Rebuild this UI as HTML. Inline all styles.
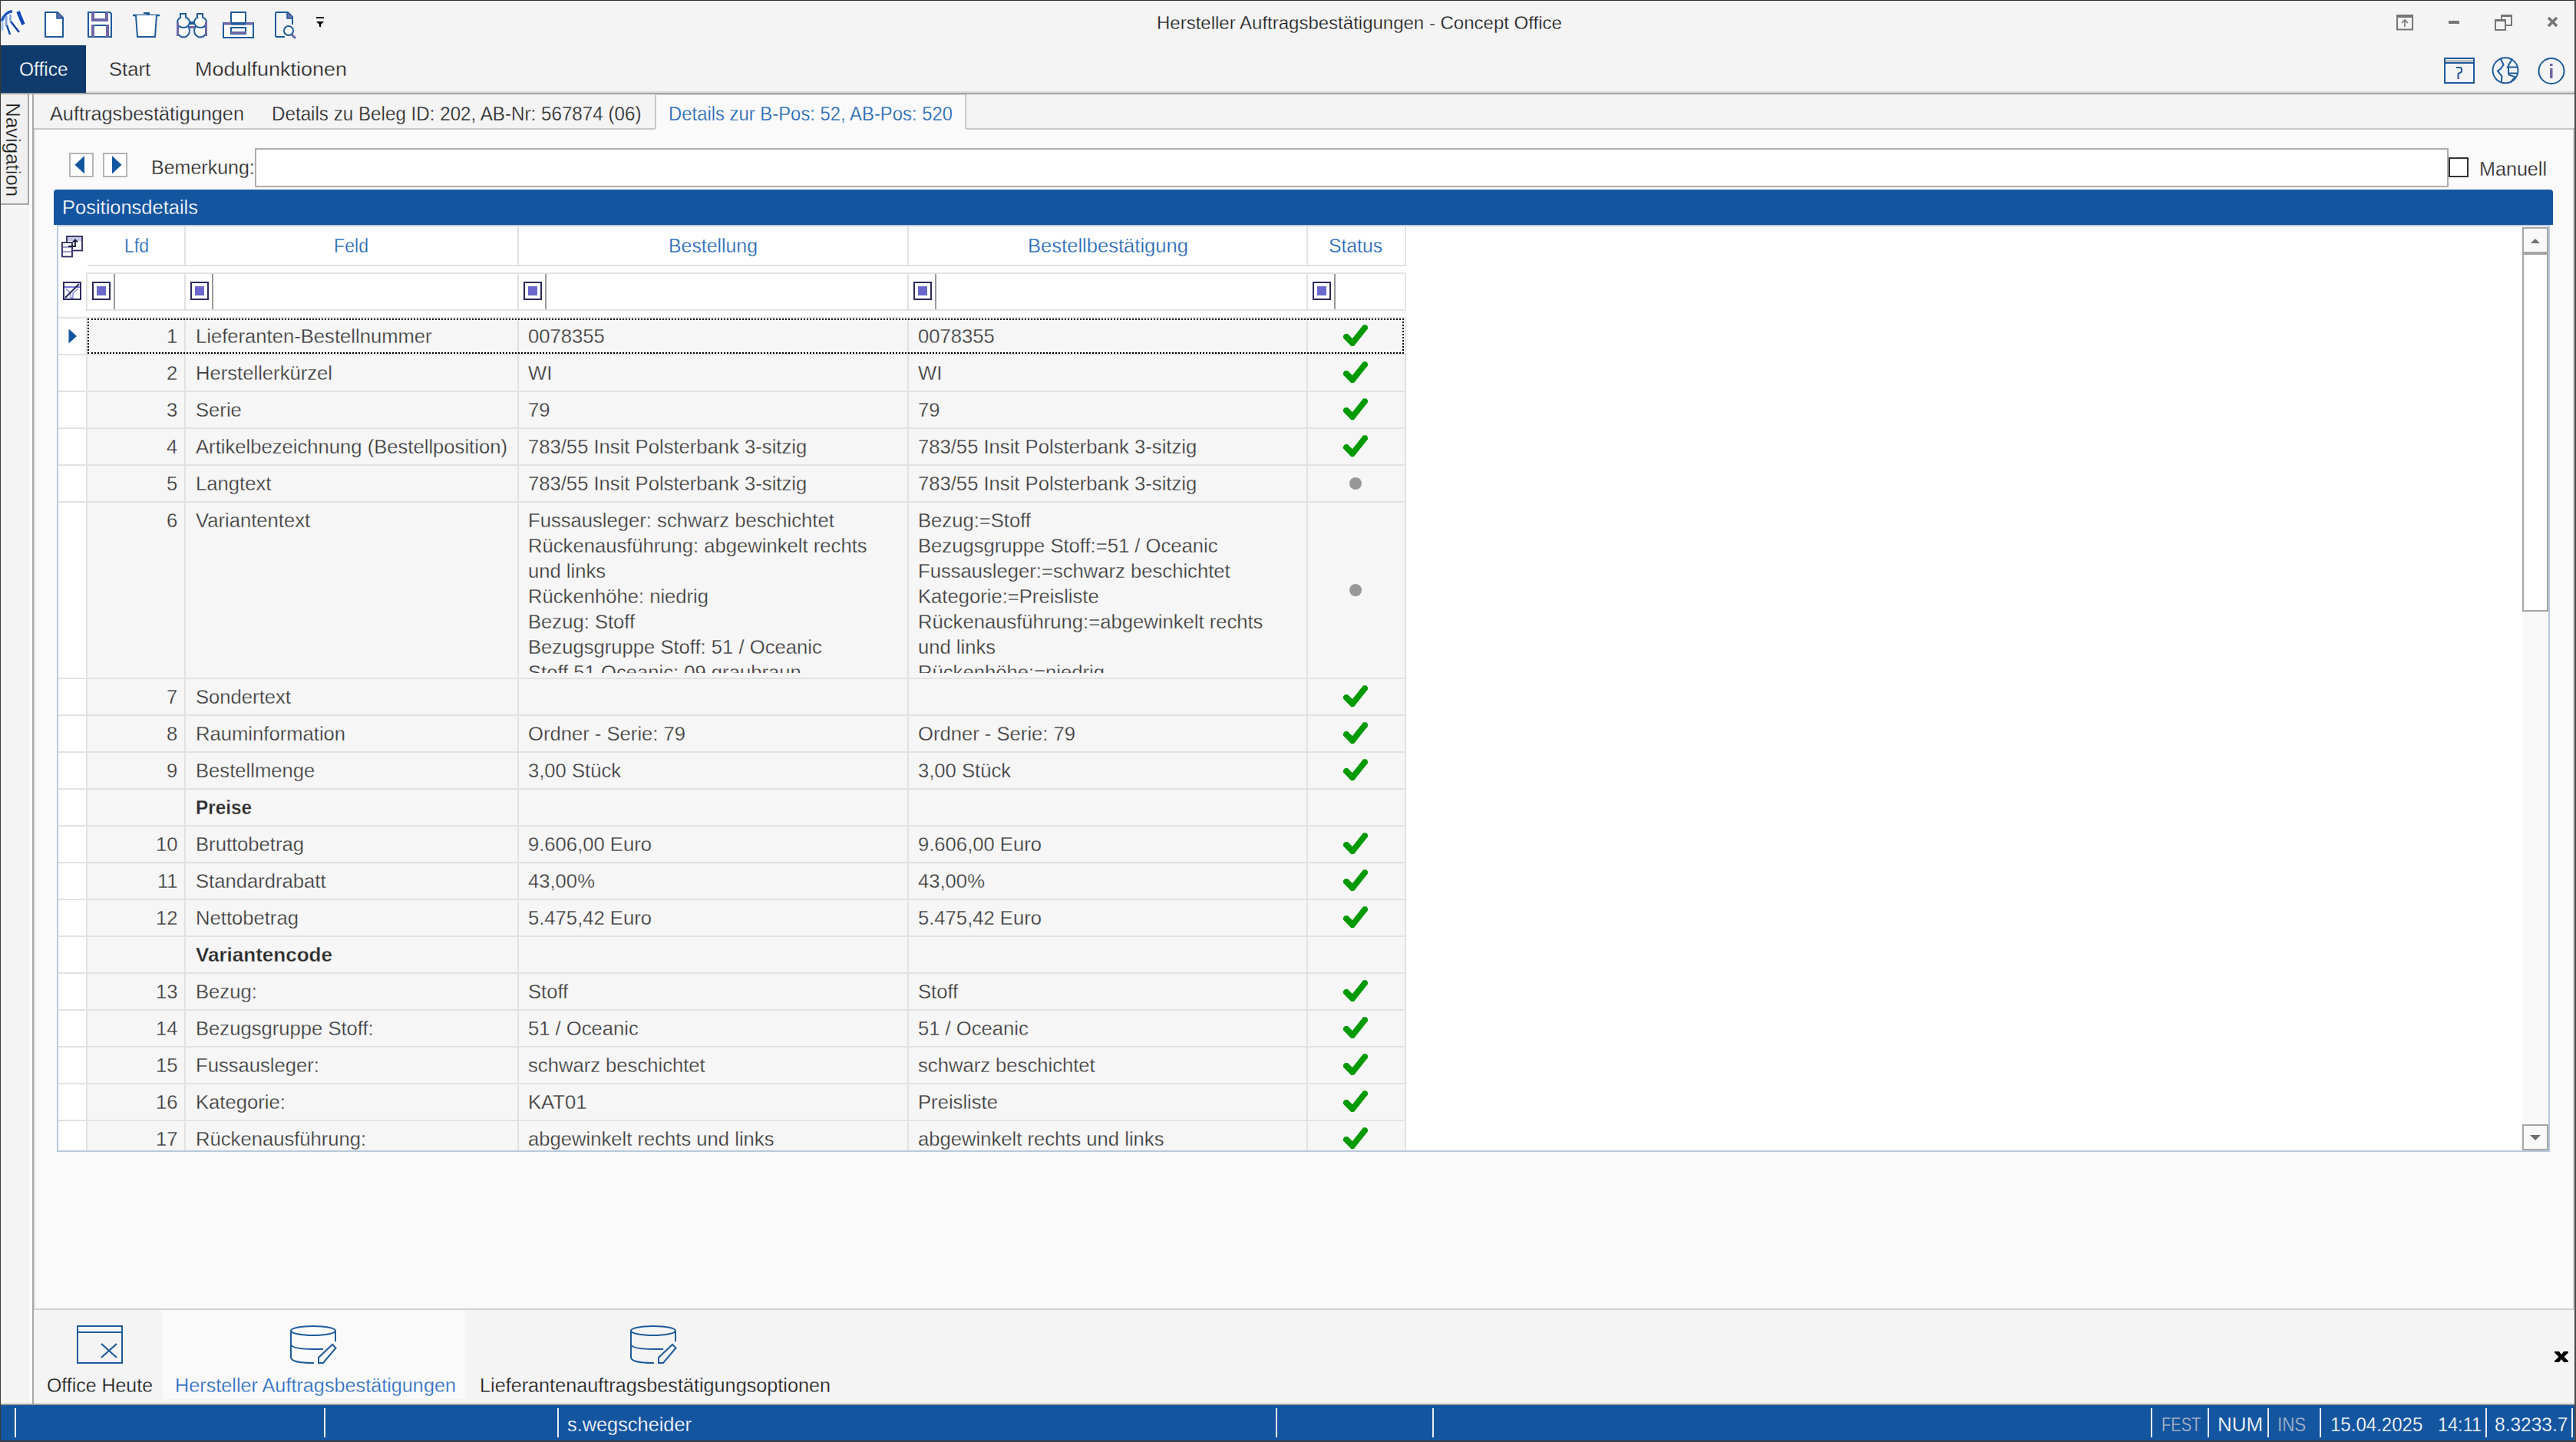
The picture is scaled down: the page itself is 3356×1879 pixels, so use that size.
<!DOCTYPE html>
<html><head><meta charset="utf-8"><title>Concept Office</title>
<style>
html,body{margin:0;padding:0;}
body{width:3356px;height:1879px;position:relative;overflow:hidden;background:#f3f3f3;font-family:"Liberation Sans", sans-serif;}
.a{position:absolute;}
.t{position:absolute;white-space:pre;transform-origin:0 0;}
svg.a{overflow:visible;}
</style></head><body>
<div class="a" style="left:0px;top:0px;width:3356px;height:1879px;background:#f4f4f4;"></div>
<svg class="a" style="left:0px;top:8px;" width="36" height="42" viewBox="0 0 36 42"><circle cx="17" cy="20.5" r="16.2" fill="#fff"/>
<path d="M16 6.5 Q6 8 2 20" stroke="#1d56c2" stroke-width="3.6" fill="none"/>
<path d="M3 19 V32" stroke="#a9c2ec" stroke-width="3" fill="none"/>
<path d="M8 13 V26" stroke="#86a6dc" stroke-width="3.2" fill="none"/><path d="M9 25 L13 37" stroke="#1a4bb0" stroke-width="2.4" fill="none"/>
<path d="M13.5 11 V20" stroke="#6f95d4" stroke-width="2.4" fill="none"/><path d="M14 20 L25 34" stroke="#0c3aa6" stroke-width="2.4" fill="none"/>
<path d="M23.5 7 L30.5 24" stroke="#1249b6" stroke-width="4.6" fill="none"/></svg>
<svg class="a" style="left:58px;top:15px;" width="26" height="35" viewBox="0 0 26 35"><path d="M1 1 H17 L24 8 V33 H1 Z" fill="#fff" stroke="#1f5b9a" stroke-width="2"/><path d="M16 1 V9 H24" fill="#6d68a8" stroke="#1f5b9a" stroke-width="1.5"/></svg>
<svg class="a" style="left:114px;top:15px;" width="33" height="35" viewBox="0 0 33 35"><path d="M1 1 H29 L31 3 V33 H1 Z" fill="#fff" stroke="#1f5b9a" stroke-width="2"/>
<rect x="5" y="1" width="4" height="12" fill="#6d68a8"/><rect x="23" y="1" width="4" height="12" fill="#6d68a8"/><rect x="5" y="9" width="22" height="4" fill="#6d68a8"/>
<rect x="5" y="17" width="22" height="2" fill="#1f5b9a"/><rect x="5" y="17" width="4" height="16" fill="#6d68a8"/><rect x="24" y="17" width="4" height="16" fill="#6d68a8"/></svg>
<svg class="a" style="left:172px;top:15px;" width="37" height="35" viewBox="0 0 37 35"><path d="M1 5 H36" stroke="#1f5b9a" stroke-width="2.5"/><path d="M15 2 H22 V5" fill="#1f5b9a" stroke="#1f5b9a" stroke-width="2"/><path d="M5 5 L7 33 H30 L32 5" fill="#fff" stroke="#1f5b9a" stroke-width="2"/></svg>
<svg class="a" style="left:229px;top:15px;" width="42" height="35" viewBox="0 0 42 35"><ellipse cx="10" cy="25" rx="8" ry="8.5" fill="#fff" stroke="#1f5b9a" stroke-width="2"/><ellipse cx="32" cy="25" rx="8" ry="8.5" fill="#fff" stroke="#1f5b9a" stroke-width="2"/>
<ellipse cx="10" cy="14" rx="8" ry="7" fill="#fff" stroke="#1f5b9a" stroke-width="2"/><ellipse cx="32" cy="14" rx="8" ry="7" fill="#fff" stroke="#1f5b9a" stroke-width="2"/>
<path d="M6 8 V3 H13 V8 M28 8 V3 H35 V8" fill="#fff" stroke="#1f5b9a" stroke-width="2"/>
<rect x="17" y="13" width="8" height="4" fill="#1f5b9a"/><rect x="17" y="19" width="8" height="3" fill="#6d68a8"/>
<rect x="1" y="14" width="3" height="18" fill="#6d68a8"/><rect x="38" y="14" width="3" height="18" fill="#6d68a8"/></svg>
<svg class="a" style="left:290px;top:15px;" width="41" height="35" viewBox="0 0 41 35"><rect x="11" y="1" width="19" height="15" fill="#fff" stroke="#1f5b9a" stroke-width="2"/>
<rect x="1" y="15" width="39" height="19" fill="#fff" stroke="#1f5b9a" stroke-width="2"/><rect x="1" y="14" width="39" height="3.5" fill="#6d68a8"/><rect x="11" y="14" width="19" height="3.5" fill="#1f5b9a"/>
<rect x="11" y="21" width="19" height="8" fill="#fff" stroke="#1f5b9a" stroke-width="2"/><rect x="11" y="26" width="19" height="3" fill="#6d68a8"/></svg>
<svg class="a" style="left:358px;top:15px;" width="32" height="36" viewBox="0 0 32 36"><path d="M1 1 H17 L23 7 V17 M13 33 H1 Z" fill="none" stroke="#1f5b9a" stroke-width="2"/><path d="M1 1 V33" stroke="#1f5b9a" stroke-width="2"/>
<path d="M16 1 V9 H23" fill="#6d68a8" stroke="#1f5b9a" stroke-width="1.5"/>
<circle cx="18" cy="25" r="6" fill="#fff" stroke="#1f5b9a" stroke-width="2"/><path d="M22 30 L27 35" stroke="#6d68a8" stroke-width="3"/></svg>
<svg class="a" style="left:412px;top:22px;" width="11" height="14" viewBox="0 0 11 14"><rect x="0" y="0" width="10" height="2" fill="#000"/><path d="M0 6 H10 L5 11 Z" fill="#000"/><rect x="4" y="9" width="2" height="4" fill="#000"/></svg>
<div class="t" style="left:1507.0px;top:18.2px;font-size:24px;line-height:24px;color:#1a1a1a;-webkit-text-stroke:0.3px #f4f4f4;">Hersteller Auftragsbestätigungen - Concept Office</div>
<svg class="a" style="left:3122px;top:19px;" width="23" height="21" viewBox="0 0 23 21"><rect x="1" y="1.5" width="20" height="18" fill="none" stroke="#767676" stroke-width="2"/><rect x="0" y="0" width="22" height="4" fill="#767676"/><path d="M11 16 V7 M7 11 L11 7 L15 11" stroke="#767676" stroke-width="1.6" fill="none"/></svg>
<div class="a" style="left:3190px;top:27px;width:14px;height:4px;background:#767676;"></div>
<svg class="a" style="left:3250px;top:19px;" width="23" height="21" viewBox="0 0 23 21"><rect x="9" y="1" width="13" height="13" fill="none" stroke="#767676" stroke-width="2"/><rect x="8" y="0" width="15" height="3" fill="#767676"/><rect x="1" y="7" width="13" height="13" fill="#f3f3f3" stroke="#767676" stroke-width="2"/><rect x="0" y="6" width="15" height="3" fill="#767676"/></svg>
<svg class="a" style="left:3318px;top:21px;" width="15" height="15" viewBox="0 0 15 15"><path d="M2 2 L13 13 M13 2 L2 13" stroke="#767676" stroke-width="3.6"/></svg>
<div class="a" style="left:0px;top:0px;width:3356px;height:1px;background:#2d2d2d;"></div>
<div class="a" style="left:0px;top:0px;width:1px;height:1879px;background:#3a3a3a;"></div>
<div class="a" style="left:3354px;top:0px;width:2px;height:1879px;background:#4a4a4a;"></div>
<div class="a" style="left:1px;top:59px;width:111px;height:62px;background:#0e3a6c;"></div>
<div class="t" style="left:24.5px;top:78.1px;font-size:25px;line-height:25px;color:#ffffff;transform:scaleX(0.9793);-webkit-text-stroke:0.3px #0e3a6c;">Office</div>
<div class="t" style="left:142.0px;top:78.1px;font-size:25px;line-height:25px;color:#262626;transform:scaleX(1.0228);-webkit-text-stroke:0.3px #f4f4f4;">Start</div>
<div class="t" style="left:254.0px;top:78.1px;font-size:25px;line-height:25px;color:#262626;transform:scaleX(1.0792);-webkit-text-stroke:0.3px #f4f4f4;">Modulfunktionen</div>
<svg class="a" style="left:3184px;top:75px;" width="41" height="35" viewBox="0 0 41 35"><rect x="1" y="1" width="38" height="32" fill="none" stroke="#1f5b9a" stroke-width="2"/><rect x="2" y="3" width="36" height="3" fill="#c0c0c0"/><rect x="1" y="6" width="38" height="2" fill="#1f5b9a"/><path d="M16 13 H21 Q23 13 23 15.5 V17 Q23 19.5 20.5 20 Q18.5 20.5 18.5 22 V26" fill="none" stroke="#1f5b9a" stroke-width="2"/><rect x="17.5" y="24" width="2.5" height="4" fill="#6d68a8"/></svg>
<svg class="a" style="left:3246px;top:75px;" width="37" height="35" viewBox="0 0 37 35"><circle cx="18" cy="16.8" r="16.5" fill="none" stroke="#1f5b9a" stroke-width="2"/><path d="M12 1.5 L15.5 9.5 L12 14.5 L8 17.4 L11 21.4 L13.5 24.4 L12.5 33 M27 1.5 L23 8.5 L21 12.5 H34 M22 13 V22 M22 20.4 H33 M22 22.4 L31 25.4 L27 29.4 L25 32.4" fill="none" stroke="#1f5b9a" stroke-width="2"/></svg>
<svg class="a" style="left:3306px;top:75px;" width="37" height="35" viewBox="0 0 37 35"><circle cx="18" cy="17.5" r="16.5" fill="none" stroke="#1f5b9a" stroke-width="2"/><rect x="16" y="8" width="3.5" height="3" fill="#6d68a8"/><rect x="16" y="14" width="3.5" height="13" fill="#6d68a8"/></svg>
<div class="a" style="left:112px;top:119px;width:3242px;height:2px;background:#d8d8d8;"></div>
<div class="a" style="left:1px;top:121px;width:3353px;height:2px;background:#a4a4a4;"></div>
<div class="a" style="left:1px;top:123px;width:36px;height:143px;background:#f0f0f0;"></div>
<div class="a" style="left:36px;top:123px;width:2px;height:144px;background:#a6a6a6;"></div>
<div class="a" style="left:1px;top:265px;width:37px;height:2px;background:#a6a6a6;"></div>
<div class="a" style="left:38px;top:123px;width:4px;height:1706px;background:#fafafa;"></div>
<div class="t" style="-webkit-text-stroke:0.3px #f0f0f0;left:3px;top:134px;width:26px;height:121px;"><div style="position:absolute;left:26px;top:0;transform-origin:0 0;transform:rotate(90deg) scaleX(1.035);font-size:25px;line-height:25px;color:#1a1a1a;white-space:pre;">Navigation</div></div>
<div class="a" style="left:42px;top:123px;width:2px;height:1706px;background:#a9a9a9;"></div>
<div class="a" style="left:44px;top:123px;width:3310px;height:45px;background:#f4f4f4;"></div>
<div class="a" style="left:44px;top:167px;width:809px;height:2px;background:#c8c8c8;"></div>
<div class="a" style="left:1259px;top:167px;width:2095px;height:2px;background:#c8c8c8;"></div>
<div class="a" style="left:853px;top:123px;width:406px;height:46px;background:#fafafa;"></div>
<div class="a" style="left:853px;top:123px;width:2px;height:45px;background:#c8c8c8;"></div>
<div class="a" style="left:853px;top:123px;width:406px;height:1px;background:#dcdcdc;"></div>
<div class="a" style="left:1257px;top:123px;width:2px;height:45px;background:#c8c8c8;"></div>
<div class="t" style="left:64.8px;top:136.1px;font-size:25px;line-height:25px;color:#262626;transform:scaleX(1.0112);-webkit-text-stroke:0.3px #f4f4f4;">Auftragsbestätigungen</div>
<div class="t" style="left:353.5px;top:136.1px;font-size:25px;line-height:25px;color:#262626;transform:scaleX(0.9678);-webkit-text-stroke:0.3px #f4f4f4;">Details zu Beleg ID: 202, AB-Nr: 567874 (06)</div>
<div class="t" style="left:871.0px;top:136.1px;font-size:25px;line-height:25px;color:#1e64b4;transform:scaleX(0.9544);-webkit-text-stroke:0.3px #fafafa;">Details zur B-Pos: 52, AB-Pos: 520</div>
<div class="a" style="left:44px;top:169px;width:3310px;height:1537px;background:#fafafa;"></div>
<div class="a" style="left:3352px;top:169px;width:2px;height:1538px;background:#d4d4d4;"></div>
<div class="a" style="left:44px;top:169px;width:2px;height:1537px;background:#dedede;"></div>
<div class="a" style="left:90px;top:199px;width:32px;height:32px;background:#ffffff;border:2px solid #b4b4b4;box-sizing:border-box;"></div>
<svg class="a" style="left:90px;top:199px;" width="32" height="32" viewBox="0 0 32 32"><path d="M20 4 V27.5 L7.5 15.75 Z" fill="#1455a0"/></svg>
<div class="a" style="left:134px;top:199px;width:32px;height:32px;background:#ffffff;border:2px solid #b4b4b4;box-sizing:border-box;"></div>
<svg class="a" style="left:134px;top:199px;" width="32" height="32" viewBox="0 0 32 32"><path d="M12 4 V27.5 L24.5 15.75 Z" fill="#1455a0"/></svg>
<div class="t" style="left:197.0px;top:205.6px;font-size:25px;line-height:25px;color:#262626;-webkit-text-stroke:0.3px #fafafa;">Bemerkung:</div>
<div class="a" style="left:332px;top:193px;width:2858px;height:51px;background:#ffffff;border:2px solid #adadad;box-sizing:border-box;"></div>
<div class="a" style="left:3190px;top:205px;width:26px;height:26px;background:#ffffff;border:2px solid #333333;box-sizing:border-box;"></div>
<div class="t" style="left:3230.0px;top:207.6px;font-size:25px;line-height:25px;color:#262626;transform:scaleX(1.0050);-webkit-text-stroke:0.3px #fafafa;">Manuell</div>
<div class="a" style="left:70px;top:247px;width:3256px;height:46px;background:#1455a0;border-radius:4px 4px 0 0;"></div>
<div class="t" style="left:81.0px;top:257.8px;font-size:25px;line-height:25px;color:#ffffff;transform:scaleX(1.0189);-webkit-text-stroke:0.3px #1455a0;">Positionsdetails</div>
<div class="a" style="left:74px;top:293px;width:3248px;height:1208px;background:#ffffff;"></div>
<div class="a" style="left:3286px;top:295px;width:34px;height:1204px;background:#f9f9f9;"></div>
<div class="a" style="left:240px;top:295px;width:2px;height:50px;background:#e2e2e2;"></div>
<div class="a" style="left:674px;top:295px;width:2px;height:50px;background:#e2e2e2;"></div>
<div class="a" style="left:1182px;top:295px;width:2px;height:50px;background:#e2e2e2;"></div>
<div class="a" style="left:1702px;top:295px;width:2px;height:50px;background:#e2e2e2;"></div>
<div class="a" style="left:1830px;top:295px;width:2px;height:50px;background:#e2e2e2;"></div>
<div class="a" style="left:114px;top:345px;width:1718px;height:2px;background:#e2e2e2;"></div>
<svg class="a" style="left:80px;top:307px;" width="28" height="28" viewBox="0 0 28 28"><rect x="7" y="1" width="20" height="18.5" fill="#fff" stroke="#2b2a5c" stroke-width="1.8"/><rect x="8" y="2" width="18" height="5" fill="#c9c8e6"/>
<rect x="1" y="9" width="13" height="18.5" fill="#fff" stroke="#2b2a5c" stroke-width="1.8"/><rect x="2" y="14" width="11" height="2" fill="#9b98d0"/><rect x="2" y="20" width="11" height="2" fill="#9b98d0"/>
<path d="M9 14 H18 V5.5 M15 8.5 L18 5.5 L21 8.5" stroke="#1a1a3a" stroke-width="1.8" fill="none"/></svg>
<div class="t" style="left:162.0px;top:307.7px;font-size:25px;line-height:25px;color:#1e64b4;transform:scaleX(0.9204);-webkit-text-stroke:0.3px #ffffff;">Lfd</div>
<div class="t" style="left:435.0px;top:307.7px;font-size:25px;line-height:25px;color:#1e64b4;transform:scaleX(0.9252);-webkit-text-stroke:0.3px #ffffff;">Feld</div>
<div class="t" style="left:871.0px;top:307.7px;font-size:25px;line-height:25px;color:#1e64b4;transform:scaleX(0.9936);-webkit-text-stroke:0.3px #ffffff;">Bestellung</div>
<div class="t" style="left:1338.5px;top:307.7px;font-size:25px;line-height:25px;color:#1e64b4;transform:scaleX(1.0229);-webkit-text-stroke:0.3px #ffffff;">Bestellbestätigung</div>
<div class="t" style="left:1731.0px;top:307.7px;font-size:25px;line-height:25px;color:#1e64b4;transform:scaleX(0.9877);-webkit-text-stroke:0.3px #ffffff;">Status</div>
<div class="a" style="left:112px;top:355px;width:1720px;height:2px;background:#e2e2e2;"></div>
<div class="a" style="left:112px;top:403px;width:1720px;height:2px;background:#e2e2e2;"></div>
<div class="a" style="left:112px;top:355px;width:2px;height:50px;background:#e2e2e2;"></div>
<div class="a" style="left:240px;top:355px;width:2px;height:50px;background:#e2e2e2;"></div>
<div class="a" style="left:674px;top:355px;width:2px;height:50px;background:#e2e2e2;"></div>
<div class="a" style="left:1182px;top:355px;width:2px;height:50px;background:#e2e2e2;"></div>
<div class="a" style="left:1702px;top:355px;width:2px;height:50px;background:#e2e2e2;"></div>
<div class="a" style="left:1830px;top:355px;width:2px;height:50px;background:#e2e2e2;"></div>
<svg class="a" style="left:82px;top:367px;" width="24" height="24" viewBox="0 0 24 24"><rect x="1" y="1" width="22" height="22" fill="#fff" stroke="#2b2a5c" stroke-width="2"/><rect x="2" y="6" width="20" height="2" fill="#7b78d8"/>
<path d="M4 9 L10 15 V21 H13 V15 L20 9" stroke="#8c89e0" stroke-width="1.5" fill="none"/><path d="M3 21 L21 3" stroke="#2b2a5c" stroke-width="2.2"/></svg>
<svg class="a" style="left:120px;top:367px;" width="24" height="24" viewBox="0 0 24 24"><rect x="1" y="1" width="22" height="22" fill="#fff" stroke="#2b2a5c" stroke-width="2"/><rect x="6" y="6" width="12" height="12" fill="#6a68cc"/></svg>
<div class="a" style="left:148px;top:357px;width:2px;height:46px;background:#9a9a9a;"></div>
<svg class="a" style="left:248px;top:367px;" width="24" height="24" viewBox="0 0 24 24"><rect x="1" y="1" width="22" height="22" fill="#fff" stroke="#2b2a5c" stroke-width="2"/><rect x="6" y="6" width="12" height="12" fill="#6a68cc"/></svg>
<div class="a" style="left:276px;top:357px;width:2px;height:46px;background:#9a9a9a;"></div>
<svg class="a" style="left:682px;top:367px;" width="24" height="24" viewBox="0 0 24 24"><rect x="1" y="1" width="22" height="22" fill="#fff" stroke="#2b2a5c" stroke-width="2"/><rect x="6" y="6" width="12" height="12" fill="#6a68cc"/></svg>
<div class="a" style="left:710px;top:357px;width:2px;height:46px;background:#9a9a9a;"></div>
<svg class="a" style="left:1190px;top:367px;" width="24" height="24" viewBox="0 0 24 24"><rect x="1" y="1" width="22" height="22" fill="#fff" stroke="#2b2a5c" stroke-width="2"/><rect x="6" y="6" width="12" height="12" fill="#6a68cc"/></svg>
<div class="a" style="left:1218px;top:357px;width:2px;height:46px;background:#9a9a9a;"></div>
<svg class="a" style="left:1710px;top:367px;" width="24" height="24" viewBox="0 0 24 24"><rect x="1" y="1" width="22" height="22" fill="#fff" stroke="#2b2a5c" stroke-width="2"/><rect x="6" y="6" width="12" height="12" fill="#6a68cc"/></svg>
<div class="a" style="left:1738px;top:357px;width:2px;height:46px;background:#9a9a9a;"></div>
<div class="a" style="left:76px;top:413px;width:3210px;height:1086px;overflow:hidden;">
<div class="a" style="left:38px;top:0px;width:1716px;height:48px;background:#f6f6f6;"></div>
<div class="a" style="left:0px;top:0px;width:1756px;height:2px;background:#e2e2e2;"></div>
<div class="a" style="left:36px;top:0px;width:2px;height:48px;background:#e2e2e2;"></div>
<div class="a" style="left:164px;top:0px;width:2px;height:48px;background:#e2e2e2;"></div>
<div class="a" style="left:598px;top:0px;width:2px;height:48px;background:#e2e2e2;"></div>
<div class="a" style="left:1106px;top:0px;width:2px;height:48px;background:#e2e2e2;"></div>
<div class="a" style="left:1626px;top:0px;width:2px;height:48px;background:#e2e2e2;"></div>
<div class="a" style="left:1754px;top:0px;width:2px;height:48px;background:#e2e2e2;"></div>
<div class="t" style="left:141.2px;top:12.8px;font-size:25px;line-height:25px;color:#3a3a3a;transform:scaleX(1.0250);-webkit-text-stroke:0.3px #f6f6f6;">1</div>
<div class="t" style="left:179.0px;top:12.8px;font-size:25px;line-height:25px;color:#3a3a3a;transform:scaleX(1.0250);-webkit-text-stroke:0.3px #f6f6f6;">Lieferanten-Bestellnummer</div>
<div class="t" style="left:612.0px;top:12.8px;font-size:25px;line-height:25px;color:#3a3a3a;transform:scaleX(1.0250);-webkit-text-stroke:0.3px #f6f6f6;">0078355</div>
<div class="t" style="left:1120.0px;top:12.8px;font-size:25px;line-height:25px;color:#3a3a3a;transform:scaleX(1.0250);-webkit-text-stroke:0.3px #f6f6f6;">0078355</div>
<svg class="a" style="left:1672px;top:9px;" width="36" height="32" viewBox="0 0 36 32"><path d="M2 15.4 L4.2 13.1 H7.8 L13.9 19 L28.1 1.2 H32 L33.9 3.4 V6.5 L15.9 28.9 H12.2 L2 18.6 Z" fill="#009a00"/></svg>
<div class="a" style="left:38px;top:48px;width:1716px;height:48px;background:#f6f6f6;"></div>
<div class="a" style="left:0px;top:48px;width:1756px;height:2px;background:#e2e2e2;"></div>
<div class="a" style="left:36px;top:48px;width:2px;height:48px;background:#e2e2e2;"></div>
<div class="a" style="left:164px;top:48px;width:2px;height:48px;background:#e2e2e2;"></div>
<div class="a" style="left:598px;top:48px;width:2px;height:48px;background:#e2e2e2;"></div>
<div class="a" style="left:1106px;top:48px;width:2px;height:48px;background:#e2e2e2;"></div>
<div class="a" style="left:1626px;top:48px;width:2px;height:48px;background:#e2e2e2;"></div>
<div class="a" style="left:1754px;top:48px;width:2px;height:48px;background:#e2e2e2;"></div>
<div class="t" style="left:141.2px;top:60.8px;font-size:25px;line-height:25px;color:#3a3a3a;transform:scaleX(1.0250);-webkit-text-stroke:0.3px #f6f6f6;">2</div>
<div class="t" style="left:179.0px;top:60.8px;font-size:25px;line-height:25px;color:#3a3a3a;transform:scaleX(1.0250);-webkit-text-stroke:0.3px #f6f6f6;">Herstellerkürzel</div>
<div class="t" style="left:612.0px;top:60.8px;font-size:25px;line-height:25px;color:#3a3a3a;transform:scaleX(1.0250);-webkit-text-stroke:0.3px #f6f6f6;">WI</div>
<div class="t" style="left:1120.0px;top:60.8px;font-size:25px;line-height:25px;color:#3a3a3a;transform:scaleX(1.0250);-webkit-text-stroke:0.3px #f6f6f6;">WI</div>
<svg class="a" style="left:1672px;top:57px;" width="36" height="32" viewBox="0 0 36 32"><path d="M2 15.4 L4.2 13.1 H7.8 L13.9 19 L28.1 1.2 H32 L33.9 3.4 V6.5 L15.9 28.9 H12.2 L2 18.6 Z" fill="#009a00"/></svg>
<div class="a" style="left:38px;top:96px;width:1716px;height:48px;background:#f6f6f6;"></div>
<div class="a" style="left:0px;top:96px;width:1756px;height:2px;background:#e2e2e2;"></div>
<div class="a" style="left:36px;top:96px;width:2px;height:48px;background:#e2e2e2;"></div>
<div class="a" style="left:164px;top:96px;width:2px;height:48px;background:#e2e2e2;"></div>
<div class="a" style="left:598px;top:96px;width:2px;height:48px;background:#e2e2e2;"></div>
<div class="a" style="left:1106px;top:96px;width:2px;height:48px;background:#e2e2e2;"></div>
<div class="a" style="left:1626px;top:96px;width:2px;height:48px;background:#e2e2e2;"></div>
<div class="a" style="left:1754px;top:96px;width:2px;height:48px;background:#e2e2e2;"></div>
<div class="t" style="left:141.2px;top:108.8px;font-size:25px;line-height:25px;color:#3a3a3a;transform:scaleX(1.0250);-webkit-text-stroke:0.3px #f6f6f6;">3</div>
<div class="t" style="left:179.0px;top:108.8px;font-size:25px;line-height:25px;color:#3a3a3a;transform:scaleX(1.0250);-webkit-text-stroke:0.3px #f6f6f6;">Serie</div>
<div class="t" style="left:612.0px;top:108.8px;font-size:25px;line-height:25px;color:#3a3a3a;transform:scaleX(1.0250);-webkit-text-stroke:0.3px #f6f6f6;">79</div>
<div class="t" style="left:1120.0px;top:108.8px;font-size:25px;line-height:25px;color:#3a3a3a;transform:scaleX(1.0250);-webkit-text-stroke:0.3px #f6f6f6;">79</div>
<svg class="a" style="left:1672px;top:105px;" width="36" height="32" viewBox="0 0 36 32"><path d="M2 15.4 L4.2 13.1 H7.8 L13.9 19 L28.1 1.2 H32 L33.9 3.4 V6.5 L15.9 28.9 H12.2 L2 18.6 Z" fill="#009a00"/></svg>
<div class="a" style="left:38px;top:144px;width:1716px;height:48px;background:#f6f6f6;"></div>
<div class="a" style="left:0px;top:144px;width:1756px;height:2px;background:#e2e2e2;"></div>
<div class="a" style="left:36px;top:144px;width:2px;height:48px;background:#e2e2e2;"></div>
<div class="a" style="left:164px;top:144px;width:2px;height:48px;background:#e2e2e2;"></div>
<div class="a" style="left:598px;top:144px;width:2px;height:48px;background:#e2e2e2;"></div>
<div class="a" style="left:1106px;top:144px;width:2px;height:48px;background:#e2e2e2;"></div>
<div class="a" style="left:1626px;top:144px;width:2px;height:48px;background:#e2e2e2;"></div>
<div class="a" style="left:1754px;top:144px;width:2px;height:48px;background:#e2e2e2;"></div>
<div class="t" style="left:141.2px;top:156.8px;font-size:25px;line-height:25px;color:#3a3a3a;transform:scaleX(1.0250);-webkit-text-stroke:0.3px #f6f6f6;">4</div>
<div class="t" style="left:179.0px;top:156.8px;font-size:25px;line-height:25px;color:#3a3a3a;transform:scaleX(1.0250);-webkit-text-stroke:0.3px #f6f6f6;">Artikelbezeichnung (Bestellposition)</div>
<div class="t" style="left:612.0px;top:156.8px;font-size:25px;line-height:25px;color:#3a3a3a;transform:scaleX(1.0250);-webkit-text-stroke:0.3px #f6f6f6;">783/55 Insit Polsterbank 3-sitzig</div>
<div class="t" style="left:1120.0px;top:156.8px;font-size:25px;line-height:25px;color:#3a3a3a;transform:scaleX(1.0250);-webkit-text-stroke:0.3px #f6f6f6;">783/55 Insit Polsterbank 3-sitzig</div>
<svg class="a" style="left:1672px;top:153px;" width="36" height="32" viewBox="0 0 36 32"><path d="M2 15.4 L4.2 13.1 H7.8 L13.9 19 L28.1 1.2 H32 L33.9 3.4 V6.5 L15.9 28.9 H12.2 L2 18.6 Z" fill="#009a00"/></svg>
<div class="a" style="left:38px;top:192px;width:1716px;height:48px;background:#f6f6f6;"></div>
<div class="a" style="left:0px;top:192px;width:1756px;height:2px;background:#e2e2e2;"></div>
<div class="a" style="left:36px;top:192px;width:2px;height:48px;background:#e2e2e2;"></div>
<div class="a" style="left:164px;top:192px;width:2px;height:48px;background:#e2e2e2;"></div>
<div class="a" style="left:598px;top:192px;width:2px;height:48px;background:#e2e2e2;"></div>
<div class="a" style="left:1106px;top:192px;width:2px;height:48px;background:#e2e2e2;"></div>
<div class="a" style="left:1626px;top:192px;width:2px;height:48px;background:#e2e2e2;"></div>
<div class="a" style="left:1754px;top:192px;width:2px;height:48px;background:#e2e2e2;"></div>
<div class="t" style="left:141.2px;top:204.8px;font-size:25px;line-height:25px;color:#3a3a3a;transform:scaleX(1.0250);-webkit-text-stroke:0.3px #f6f6f6;">5</div>
<div class="t" style="left:179.0px;top:204.8px;font-size:25px;line-height:25px;color:#3a3a3a;transform:scaleX(1.0250);-webkit-text-stroke:0.3px #f6f6f6;">Langtext</div>
<div class="t" style="left:612.0px;top:204.8px;font-size:25px;line-height:25px;color:#3a3a3a;transform:scaleX(1.0250);-webkit-text-stroke:0.3px #f6f6f6;">783/55 Insit Polsterbank 3-sitzig</div>
<div class="t" style="left:1120.0px;top:204.8px;font-size:25px;line-height:25px;color:#3a3a3a;transform:scaleX(1.0250);-webkit-text-stroke:0.3px #f6f6f6;">783/55 Insit Polsterbank 3-sitzig</div>
<div class="a" style="left:1682px;top:209px;width:16px;height:16px;border-radius:50%;background:#979797;"></div>
<div class="a" style="left:38px;top:240px;width:1716px;height:230px;background:#f6f6f6;"></div>
<div class="a" style="left:0px;top:240px;width:1756px;height:2px;background:#e2e2e2;"></div>
<div class="a" style="left:36px;top:240px;width:2px;height:230px;background:#e2e2e2;"></div>
<div class="a" style="left:164px;top:240px;width:2px;height:230px;background:#e2e2e2;"></div>
<div class="a" style="left:598px;top:240px;width:2px;height:230px;background:#e2e2e2;"></div>
<div class="a" style="left:1106px;top:240px;width:2px;height:230px;background:#e2e2e2;"></div>
<div class="a" style="left:1626px;top:240px;width:2px;height:230px;background:#e2e2e2;"></div>
<div class="a" style="left:1754px;top:240px;width:2px;height:230px;background:#e2e2e2;"></div>
<div class="t" style="left:141.2px;top:252.8px;font-size:25px;line-height:25px;color:#3a3a3a;transform:scaleX(1.0250);-webkit-text-stroke:0.3px #f6f6f6;">6</div>
<div class="t" style="left:179.0px;top:252.8px;font-size:25px;line-height:25px;color:#3a3a3a;transform:scaleX(1.0250);-webkit-text-stroke:0.3px #f6f6f6;">Variantentext</div>
<div class="a" style="left:600px;top:242px;width:1026px;height:222px;overflow:hidden;">
<div class="t" style="left:12.0px;top:10.8px;font-size:25px;line-height:25px;color:#3a3a3a;transform:scaleX(1.0250);-webkit-text-stroke:0.3px #f6f6f6;">Fussausleger: schwarz beschichtet</div>
<div class="t" style="left:12.0px;top:43.8px;font-size:25px;line-height:25px;color:#3a3a3a;transform:scaleX(1.0250);-webkit-text-stroke:0.3px #f6f6f6;">Rückenausführung: abgewinkelt rechts</div>
<div class="t" style="left:12.0px;top:76.8px;font-size:25px;line-height:25px;color:#3a3a3a;transform:scaleX(1.0250);-webkit-text-stroke:0.3px #f6f6f6;">und links</div>
<div class="t" style="left:12.0px;top:109.8px;font-size:25px;line-height:25px;color:#3a3a3a;transform:scaleX(1.0250);-webkit-text-stroke:0.3px #f6f6f6;">Rückenhöhe: niedrig</div>
<div class="t" style="left:12.0px;top:142.8px;font-size:25px;line-height:25px;color:#3a3a3a;transform:scaleX(1.0250);-webkit-text-stroke:0.3px #f6f6f6;">Bezug: Stoff</div>
<div class="t" style="left:12.0px;top:175.8px;font-size:25px;line-height:25px;color:#3a3a3a;transform:scaleX(1.0250);-webkit-text-stroke:0.3px #f6f6f6;">Bezugsgruppe Stoff: 51 / Oceanic</div>
<div class="t" style="left:12.0px;top:208.8px;font-size:25px;line-height:25px;color:#3a3a3a;transform:scaleX(1.0250);-webkit-text-stroke:0.3px #f6f6f6;">Stoff 51 Oceanic: 09 graubraun</div>
</div>
<div class="a" style="left:1108px;top:242px;width:518px;height:222px;overflow:hidden;">
<div class="t" style="left:12.0px;top:10.8px;font-size:25px;line-height:25px;color:#3a3a3a;transform:scaleX(1.0250);-webkit-text-stroke:0.3px #f6f6f6;">Bezug:=Stoff</div>
<div class="t" style="left:12.0px;top:43.8px;font-size:25px;line-height:25px;color:#3a3a3a;transform:scaleX(1.0250);-webkit-text-stroke:0.3px #f6f6f6;">Bezugsgruppe Stoff:=51 / Oceanic</div>
<div class="t" style="left:12.0px;top:76.8px;font-size:25px;line-height:25px;color:#3a3a3a;transform:scaleX(1.0250);-webkit-text-stroke:0.3px #f6f6f6;">Fussausleger:=schwarz beschichtet</div>
<div class="t" style="left:12.0px;top:109.8px;font-size:25px;line-height:25px;color:#3a3a3a;transform:scaleX(1.0250);-webkit-text-stroke:0.3px #f6f6f6;">Kategorie:=Preisliste</div>
<div class="t" style="left:12.0px;top:142.8px;font-size:25px;line-height:25px;color:#3a3a3a;transform:scaleX(1.0250);-webkit-text-stroke:0.3px #f6f6f6;">Rückenausführung:=abgewinkelt rechts</div>
<div class="t" style="left:12.0px;top:175.8px;font-size:25px;line-height:25px;color:#3a3a3a;transform:scaleX(1.0250);-webkit-text-stroke:0.3px #f6f6f6;">und links</div>
<div class="t" style="left:12.0px;top:208.8px;font-size:25px;line-height:25px;color:#3a3a3a;transform:scaleX(1.0250);-webkit-text-stroke:0.3px #f6f6f6;">Rückenhöhe:=niedrig</div>
</div>
<div class="a" style="left:1682px;top:348px;width:16px;height:16px;border-radius:50%;background:#979797;"></div>
<div class="a" style="left:38px;top:470px;width:1716px;height:48px;background:#f6f6f6;"></div>
<div class="a" style="left:0px;top:470px;width:1756px;height:2px;background:#e2e2e2;"></div>
<div class="a" style="left:36px;top:470px;width:2px;height:48px;background:#e2e2e2;"></div>
<div class="a" style="left:164px;top:470px;width:2px;height:48px;background:#e2e2e2;"></div>
<div class="a" style="left:598px;top:470px;width:2px;height:48px;background:#e2e2e2;"></div>
<div class="a" style="left:1106px;top:470px;width:2px;height:48px;background:#e2e2e2;"></div>
<div class="a" style="left:1626px;top:470px;width:2px;height:48px;background:#e2e2e2;"></div>
<div class="a" style="left:1754px;top:470px;width:2px;height:48px;background:#e2e2e2;"></div>
<div class="t" style="left:141.2px;top:482.8px;font-size:25px;line-height:25px;color:#3a3a3a;transform:scaleX(1.0250);-webkit-text-stroke:0.3px #f6f6f6;">7</div>
<div class="t" style="left:179.0px;top:482.8px;font-size:25px;line-height:25px;color:#3a3a3a;transform:scaleX(1.0250);-webkit-text-stroke:0.3px #f6f6f6;">Sondertext</div>
<svg class="a" style="left:1672px;top:479px;" width="36" height="32" viewBox="0 0 36 32"><path d="M2 15.4 L4.2 13.1 H7.8 L13.9 19 L28.1 1.2 H32 L33.9 3.4 V6.5 L15.9 28.9 H12.2 L2 18.6 Z" fill="#009a00"/></svg>
<div class="a" style="left:38px;top:518px;width:1716px;height:48px;background:#f6f6f6;"></div>
<div class="a" style="left:0px;top:518px;width:1756px;height:2px;background:#e2e2e2;"></div>
<div class="a" style="left:36px;top:518px;width:2px;height:48px;background:#e2e2e2;"></div>
<div class="a" style="left:164px;top:518px;width:2px;height:48px;background:#e2e2e2;"></div>
<div class="a" style="left:598px;top:518px;width:2px;height:48px;background:#e2e2e2;"></div>
<div class="a" style="left:1106px;top:518px;width:2px;height:48px;background:#e2e2e2;"></div>
<div class="a" style="left:1626px;top:518px;width:2px;height:48px;background:#e2e2e2;"></div>
<div class="a" style="left:1754px;top:518px;width:2px;height:48px;background:#e2e2e2;"></div>
<div class="t" style="left:141.2px;top:530.8px;font-size:25px;line-height:25px;color:#3a3a3a;transform:scaleX(1.0250);-webkit-text-stroke:0.3px #f6f6f6;">8</div>
<div class="t" style="left:179.0px;top:530.8px;font-size:25px;line-height:25px;color:#3a3a3a;transform:scaleX(1.0250);-webkit-text-stroke:0.3px #f6f6f6;">Rauminformation</div>
<div class="t" style="left:612.0px;top:530.8px;font-size:25px;line-height:25px;color:#3a3a3a;transform:scaleX(1.0250);-webkit-text-stroke:0.3px #f6f6f6;">Ordner - Serie: 79</div>
<div class="t" style="left:1120.0px;top:530.8px;font-size:25px;line-height:25px;color:#3a3a3a;transform:scaleX(1.0250);-webkit-text-stroke:0.3px #f6f6f6;">Ordner - Serie: 79</div>
<svg class="a" style="left:1672px;top:527px;" width="36" height="32" viewBox="0 0 36 32"><path d="M2 15.4 L4.2 13.1 H7.8 L13.9 19 L28.1 1.2 H32 L33.9 3.4 V6.5 L15.9 28.9 H12.2 L2 18.6 Z" fill="#009a00"/></svg>
<div class="a" style="left:38px;top:566px;width:1716px;height:48px;background:#f6f6f6;"></div>
<div class="a" style="left:0px;top:566px;width:1756px;height:2px;background:#e2e2e2;"></div>
<div class="a" style="left:36px;top:566px;width:2px;height:48px;background:#e2e2e2;"></div>
<div class="a" style="left:164px;top:566px;width:2px;height:48px;background:#e2e2e2;"></div>
<div class="a" style="left:598px;top:566px;width:2px;height:48px;background:#e2e2e2;"></div>
<div class="a" style="left:1106px;top:566px;width:2px;height:48px;background:#e2e2e2;"></div>
<div class="a" style="left:1626px;top:566px;width:2px;height:48px;background:#e2e2e2;"></div>
<div class="a" style="left:1754px;top:566px;width:2px;height:48px;background:#e2e2e2;"></div>
<div class="t" style="left:141.2px;top:578.8px;font-size:25px;line-height:25px;color:#3a3a3a;transform:scaleX(1.0250);-webkit-text-stroke:0.3px #f6f6f6;">9</div>
<div class="t" style="left:179.0px;top:578.8px;font-size:25px;line-height:25px;color:#3a3a3a;transform:scaleX(1.0250);-webkit-text-stroke:0.3px #f6f6f6;">Bestellmenge</div>
<div class="t" style="left:612.0px;top:578.8px;font-size:25px;line-height:25px;color:#3a3a3a;transform:scaleX(1.0250);-webkit-text-stroke:0.3px #f6f6f6;">3,00 Stück</div>
<div class="t" style="left:1120.0px;top:578.8px;font-size:25px;line-height:25px;color:#3a3a3a;transform:scaleX(1.0250);-webkit-text-stroke:0.3px #f6f6f6;">3,00 Stück</div>
<svg class="a" style="left:1672px;top:575px;" width="36" height="32" viewBox="0 0 36 32"><path d="M2 15.4 L4.2 13.1 H7.8 L13.9 19 L28.1 1.2 H32 L33.9 3.4 V6.5 L15.9 28.9 H12.2 L2 18.6 Z" fill="#009a00"/></svg>
<div class="a" style="left:38px;top:614px;width:1716px;height:48px;background:#f6f6f6;"></div>
<div class="a" style="left:0px;top:614px;width:1756px;height:2px;background:#e2e2e2;"></div>
<div class="a" style="left:36px;top:614px;width:2px;height:48px;background:#e2e2e2;"></div>
<div class="a" style="left:164px;top:614px;width:2px;height:48px;background:#e2e2e2;"></div>
<div class="a" style="left:598px;top:614px;width:2px;height:48px;background:#e2e2e2;"></div>
<div class="a" style="left:1106px;top:614px;width:2px;height:48px;background:#e2e2e2;"></div>
<div class="a" style="left:1626px;top:614px;width:2px;height:48px;background:#e2e2e2;"></div>
<div class="a" style="left:1754px;top:614px;width:2px;height:48px;background:#e2e2e2;"></div>
<div class="t" style="left:179.0px;top:626.8px;font-size:25px;line-height:25px;color:#2a2a2a;font-weight:700;transform:scaleX(0.9725);-webkit-text-stroke:0.3px #f6f6f6;">Preise</div>
<div class="a" style="left:38px;top:662px;width:1716px;height:48px;background:#f6f6f6;"></div>
<div class="a" style="left:0px;top:662px;width:1756px;height:2px;background:#e2e2e2;"></div>
<div class="a" style="left:36px;top:662px;width:2px;height:48px;background:#e2e2e2;"></div>
<div class="a" style="left:164px;top:662px;width:2px;height:48px;background:#e2e2e2;"></div>
<div class="a" style="left:598px;top:662px;width:2px;height:48px;background:#e2e2e2;"></div>
<div class="a" style="left:1106px;top:662px;width:2px;height:48px;background:#e2e2e2;"></div>
<div class="a" style="left:1626px;top:662px;width:2px;height:48px;background:#e2e2e2;"></div>
<div class="a" style="left:1754px;top:662px;width:2px;height:48px;background:#e2e2e2;"></div>
<div class="t" style="left:127.0px;top:674.8px;font-size:25px;line-height:25px;color:#3a3a3a;transform:scaleX(1.0250);-webkit-text-stroke:0.3px #f6f6f6;">10</div>
<div class="t" style="left:179.0px;top:674.8px;font-size:25px;line-height:25px;color:#3a3a3a;transform:scaleX(1.0250);-webkit-text-stroke:0.3px #f6f6f6;">Bruttobetrag</div>
<div class="t" style="left:612.0px;top:674.8px;font-size:25px;line-height:25px;color:#3a3a3a;transform:scaleX(1.0250);-webkit-text-stroke:0.3px #f6f6f6;">9.606,00 Euro</div>
<div class="t" style="left:1120.0px;top:674.8px;font-size:25px;line-height:25px;color:#3a3a3a;transform:scaleX(1.0250);-webkit-text-stroke:0.3px #f6f6f6;">9.606,00 Euro</div>
<svg class="a" style="left:1672px;top:671px;" width="36" height="32" viewBox="0 0 36 32"><path d="M2 15.4 L4.2 13.1 H7.8 L13.9 19 L28.1 1.2 H32 L33.9 3.4 V6.5 L15.9 28.9 H12.2 L2 18.6 Z" fill="#009a00"/></svg>
<div class="a" style="left:38px;top:710px;width:1716px;height:48px;background:#f6f6f6;"></div>
<div class="a" style="left:0px;top:710px;width:1756px;height:2px;background:#e2e2e2;"></div>
<div class="a" style="left:36px;top:710px;width:2px;height:48px;background:#e2e2e2;"></div>
<div class="a" style="left:164px;top:710px;width:2px;height:48px;background:#e2e2e2;"></div>
<div class="a" style="left:598px;top:710px;width:2px;height:48px;background:#e2e2e2;"></div>
<div class="a" style="left:1106px;top:710px;width:2px;height:48px;background:#e2e2e2;"></div>
<div class="a" style="left:1626px;top:710px;width:2px;height:48px;background:#e2e2e2;"></div>
<div class="a" style="left:1754px;top:710px;width:2px;height:48px;background:#e2e2e2;"></div>
<div class="t" style="left:128.9px;top:722.8px;font-size:25px;line-height:25px;color:#3a3a3a;transform:scaleX(1.0250);-webkit-text-stroke:0.3px #f6f6f6;">11</div>
<div class="t" style="left:179.0px;top:722.8px;font-size:25px;line-height:25px;color:#3a3a3a;transform:scaleX(1.0250);-webkit-text-stroke:0.3px #f6f6f6;">Standardrabatt</div>
<div class="t" style="left:612.0px;top:722.8px;font-size:25px;line-height:25px;color:#3a3a3a;transform:scaleX(1.0250);-webkit-text-stroke:0.3px #f6f6f6;">43,00%</div>
<div class="t" style="left:1120.0px;top:722.8px;font-size:25px;line-height:25px;color:#3a3a3a;transform:scaleX(1.0250);-webkit-text-stroke:0.3px #f6f6f6;">43,00%</div>
<svg class="a" style="left:1672px;top:719px;" width="36" height="32" viewBox="0 0 36 32"><path d="M2 15.4 L4.2 13.1 H7.8 L13.9 19 L28.1 1.2 H32 L33.9 3.4 V6.5 L15.9 28.9 H12.2 L2 18.6 Z" fill="#009a00"/></svg>
<div class="a" style="left:38px;top:758px;width:1716px;height:48px;background:#f6f6f6;"></div>
<div class="a" style="left:0px;top:758px;width:1756px;height:2px;background:#e2e2e2;"></div>
<div class="a" style="left:36px;top:758px;width:2px;height:48px;background:#e2e2e2;"></div>
<div class="a" style="left:164px;top:758px;width:2px;height:48px;background:#e2e2e2;"></div>
<div class="a" style="left:598px;top:758px;width:2px;height:48px;background:#e2e2e2;"></div>
<div class="a" style="left:1106px;top:758px;width:2px;height:48px;background:#e2e2e2;"></div>
<div class="a" style="left:1626px;top:758px;width:2px;height:48px;background:#e2e2e2;"></div>
<div class="a" style="left:1754px;top:758px;width:2px;height:48px;background:#e2e2e2;"></div>
<div class="t" style="left:127.0px;top:770.8px;font-size:25px;line-height:25px;color:#3a3a3a;transform:scaleX(1.0250);-webkit-text-stroke:0.3px #f6f6f6;">12</div>
<div class="t" style="left:179.0px;top:770.8px;font-size:25px;line-height:25px;color:#3a3a3a;transform:scaleX(1.0250);-webkit-text-stroke:0.3px #f6f6f6;">Nettobetrag</div>
<div class="t" style="left:612.0px;top:770.8px;font-size:25px;line-height:25px;color:#3a3a3a;transform:scaleX(1.0250);-webkit-text-stroke:0.3px #f6f6f6;">5.475,42 Euro</div>
<div class="t" style="left:1120.0px;top:770.8px;font-size:25px;line-height:25px;color:#3a3a3a;transform:scaleX(1.0250);-webkit-text-stroke:0.3px #f6f6f6;">5.475,42 Euro</div>
<svg class="a" style="left:1672px;top:767px;" width="36" height="32" viewBox="0 0 36 32"><path d="M2 15.4 L4.2 13.1 H7.8 L13.9 19 L28.1 1.2 H32 L33.9 3.4 V6.5 L15.9 28.9 H12.2 L2 18.6 Z" fill="#009a00"/></svg>
<div class="a" style="left:38px;top:806px;width:1716px;height:48px;background:#f6f6f6;"></div>
<div class="a" style="left:0px;top:806px;width:1756px;height:2px;background:#e2e2e2;"></div>
<div class="a" style="left:36px;top:806px;width:2px;height:48px;background:#e2e2e2;"></div>
<div class="a" style="left:164px;top:806px;width:2px;height:48px;background:#e2e2e2;"></div>
<div class="a" style="left:598px;top:806px;width:2px;height:48px;background:#e2e2e2;"></div>
<div class="a" style="left:1106px;top:806px;width:2px;height:48px;background:#e2e2e2;"></div>
<div class="a" style="left:1626px;top:806px;width:2px;height:48px;background:#e2e2e2;"></div>
<div class="a" style="left:1754px;top:806px;width:2px;height:48px;background:#e2e2e2;"></div>
<div class="t" style="left:179.0px;top:818.8px;font-size:25px;line-height:25px;color:#2a2a2a;font-weight:700;transform:scaleX(1.0415);-webkit-text-stroke:0.3px #f6f6f6;">Variantencode</div>
<div class="a" style="left:38px;top:854px;width:1716px;height:48px;background:#f6f6f6;"></div>
<div class="a" style="left:0px;top:854px;width:1756px;height:2px;background:#e2e2e2;"></div>
<div class="a" style="left:36px;top:854px;width:2px;height:48px;background:#e2e2e2;"></div>
<div class="a" style="left:164px;top:854px;width:2px;height:48px;background:#e2e2e2;"></div>
<div class="a" style="left:598px;top:854px;width:2px;height:48px;background:#e2e2e2;"></div>
<div class="a" style="left:1106px;top:854px;width:2px;height:48px;background:#e2e2e2;"></div>
<div class="a" style="left:1626px;top:854px;width:2px;height:48px;background:#e2e2e2;"></div>
<div class="a" style="left:1754px;top:854px;width:2px;height:48px;background:#e2e2e2;"></div>
<div class="t" style="left:127.0px;top:866.8px;font-size:25px;line-height:25px;color:#3a3a3a;transform:scaleX(1.0250);-webkit-text-stroke:0.3px #f6f6f6;">13</div>
<div class="t" style="left:179.0px;top:866.8px;font-size:25px;line-height:25px;color:#3a3a3a;transform:scaleX(1.0250);-webkit-text-stroke:0.3px #f6f6f6;">Bezug:</div>
<div class="t" style="left:612.0px;top:866.8px;font-size:25px;line-height:25px;color:#3a3a3a;transform:scaleX(1.0250);-webkit-text-stroke:0.3px #f6f6f6;">Stoff</div>
<div class="t" style="left:1120.0px;top:866.8px;font-size:25px;line-height:25px;color:#3a3a3a;transform:scaleX(1.0250);-webkit-text-stroke:0.3px #f6f6f6;">Stoff</div>
<svg class="a" style="left:1672px;top:863px;" width="36" height="32" viewBox="0 0 36 32"><path d="M2 15.4 L4.2 13.1 H7.8 L13.9 19 L28.1 1.2 H32 L33.9 3.4 V6.5 L15.9 28.9 H12.2 L2 18.6 Z" fill="#009a00"/></svg>
<div class="a" style="left:38px;top:902px;width:1716px;height:48px;background:#f6f6f6;"></div>
<div class="a" style="left:0px;top:902px;width:1756px;height:2px;background:#e2e2e2;"></div>
<div class="a" style="left:36px;top:902px;width:2px;height:48px;background:#e2e2e2;"></div>
<div class="a" style="left:164px;top:902px;width:2px;height:48px;background:#e2e2e2;"></div>
<div class="a" style="left:598px;top:902px;width:2px;height:48px;background:#e2e2e2;"></div>
<div class="a" style="left:1106px;top:902px;width:2px;height:48px;background:#e2e2e2;"></div>
<div class="a" style="left:1626px;top:902px;width:2px;height:48px;background:#e2e2e2;"></div>
<div class="a" style="left:1754px;top:902px;width:2px;height:48px;background:#e2e2e2;"></div>
<div class="t" style="left:127.0px;top:914.8px;font-size:25px;line-height:25px;color:#3a3a3a;transform:scaleX(1.0250);-webkit-text-stroke:0.3px #f6f6f6;">14</div>
<div class="t" style="left:179.0px;top:914.8px;font-size:25px;line-height:25px;color:#3a3a3a;transform:scaleX(1.0250);-webkit-text-stroke:0.3px #f6f6f6;">Bezugsgruppe Stoff:</div>
<div class="t" style="left:612.0px;top:914.8px;font-size:25px;line-height:25px;color:#3a3a3a;transform:scaleX(1.0250);-webkit-text-stroke:0.3px #f6f6f6;">51 / Oceanic</div>
<div class="t" style="left:1120.0px;top:914.8px;font-size:25px;line-height:25px;color:#3a3a3a;transform:scaleX(1.0250);-webkit-text-stroke:0.3px #f6f6f6;">51 / Oceanic</div>
<svg class="a" style="left:1672px;top:911px;" width="36" height="32" viewBox="0 0 36 32"><path d="M2 15.4 L4.2 13.1 H7.8 L13.9 19 L28.1 1.2 H32 L33.9 3.4 V6.5 L15.9 28.9 H12.2 L2 18.6 Z" fill="#009a00"/></svg>
<div class="a" style="left:38px;top:950px;width:1716px;height:48px;background:#f6f6f6;"></div>
<div class="a" style="left:0px;top:950px;width:1756px;height:2px;background:#e2e2e2;"></div>
<div class="a" style="left:36px;top:950px;width:2px;height:48px;background:#e2e2e2;"></div>
<div class="a" style="left:164px;top:950px;width:2px;height:48px;background:#e2e2e2;"></div>
<div class="a" style="left:598px;top:950px;width:2px;height:48px;background:#e2e2e2;"></div>
<div class="a" style="left:1106px;top:950px;width:2px;height:48px;background:#e2e2e2;"></div>
<div class="a" style="left:1626px;top:950px;width:2px;height:48px;background:#e2e2e2;"></div>
<div class="a" style="left:1754px;top:950px;width:2px;height:48px;background:#e2e2e2;"></div>
<div class="t" style="left:127.0px;top:962.8px;font-size:25px;line-height:25px;color:#3a3a3a;transform:scaleX(1.0250);-webkit-text-stroke:0.3px #f6f6f6;">15</div>
<div class="t" style="left:179.0px;top:962.8px;font-size:25px;line-height:25px;color:#3a3a3a;transform:scaleX(1.0250);-webkit-text-stroke:0.3px #f6f6f6;">Fussausleger:</div>
<div class="t" style="left:612.0px;top:962.8px;font-size:25px;line-height:25px;color:#3a3a3a;transform:scaleX(1.0250);-webkit-text-stroke:0.3px #f6f6f6;">schwarz beschichtet</div>
<div class="t" style="left:1120.0px;top:962.8px;font-size:25px;line-height:25px;color:#3a3a3a;transform:scaleX(1.0250);-webkit-text-stroke:0.3px #f6f6f6;">schwarz beschichtet</div>
<svg class="a" style="left:1672px;top:959px;" width="36" height="32" viewBox="0 0 36 32"><path d="M2 15.4 L4.2 13.1 H7.8 L13.9 19 L28.1 1.2 H32 L33.9 3.4 V6.5 L15.9 28.9 H12.2 L2 18.6 Z" fill="#009a00"/></svg>
<div class="a" style="left:38px;top:998px;width:1716px;height:48px;background:#f6f6f6;"></div>
<div class="a" style="left:0px;top:998px;width:1756px;height:2px;background:#e2e2e2;"></div>
<div class="a" style="left:36px;top:998px;width:2px;height:48px;background:#e2e2e2;"></div>
<div class="a" style="left:164px;top:998px;width:2px;height:48px;background:#e2e2e2;"></div>
<div class="a" style="left:598px;top:998px;width:2px;height:48px;background:#e2e2e2;"></div>
<div class="a" style="left:1106px;top:998px;width:2px;height:48px;background:#e2e2e2;"></div>
<div class="a" style="left:1626px;top:998px;width:2px;height:48px;background:#e2e2e2;"></div>
<div class="a" style="left:1754px;top:998px;width:2px;height:48px;background:#e2e2e2;"></div>
<div class="t" style="left:127.0px;top:1010.8px;font-size:25px;line-height:25px;color:#3a3a3a;transform:scaleX(1.0250);-webkit-text-stroke:0.3px #f6f6f6;">16</div>
<div class="t" style="left:179.0px;top:1010.8px;font-size:25px;line-height:25px;color:#3a3a3a;transform:scaleX(1.0250);-webkit-text-stroke:0.3px #f6f6f6;">Kategorie:</div>
<div class="t" style="left:612.0px;top:1010.8px;font-size:25px;line-height:25px;color:#3a3a3a;transform:scaleX(1.0250);-webkit-text-stroke:0.3px #f6f6f6;">KAT01</div>
<div class="t" style="left:1120.0px;top:1010.8px;font-size:25px;line-height:25px;color:#3a3a3a;transform:scaleX(1.0250);-webkit-text-stroke:0.3px #f6f6f6;">Preisliste</div>
<svg class="a" style="left:1672px;top:1007px;" width="36" height="32" viewBox="0 0 36 32"><path d="M2 15.4 L4.2 13.1 H7.8 L13.9 19 L28.1 1.2 H32 L33.9 3.4 V6.5 L15.9 28.9 H12.2 L2 18.6 Z" fill="#009a00"/></svg>
<div class="a" style="left:38px;top:1046px;width:1716px;height:48px;background:#f6f6f6;"></div>
<div class="a" style="left:0px;top:1046px;width:1756px;height:2px;background:#e2e2e2;"></div>
<div class="a" style="left:36px;top:1046px;width:2px;height:48px;background:#e2e2e2;"></div>
<div class="a" style="left:164px;top:1046px;width:2px;height:48px;background:#e2e2e2;"></div>
<div class="a" style="left:598px;top:1046px;width:2px;height:48px;background:#e2e2e2;"></div>
<div class="a" style="left:1106px;top:1046px;width:2px;height:48px;background:#e2e2e2;"></div>
<div class="a" style="left:1626px;top:1046px;width:2px;height:48px;background:#e2e2e2;"></div>
<div class="a" style="left:1754px;top:1046px;width:2px;height:48px;background:#e2e2e2;"></div>
<div class="t" style="left:127.0px;top:1058.8px;font-size:25px;line-height:25px;color:#3a3a3a;transform:scaleX(1.0250);-webkit-text-stroke:0.3px #f6f6f6;">17</div>
<div class="t" style="left:179.0px;top:1058.8px;font-size:25px;line-height:25px;color:#3a3a3a;transform:scaleX(1.0250);-webkit-text-stroke:0.3px #f6f6f6;">Rückenausführung:</div>
<div class="t" style="left:612.0px;top:1058.8px;font-size:25px;line-height:25px;color:#3a3a3a;transform:scaleX(1.0250);-webkit-text-stroke:0.3px #f6f6f6;">abgewinkelt rechts und links</div>
<div class="t" style="left:1120.0px;top:1058.8px;font-size:25px;line-height:25px;color:#3a3a3a;transform:scaleX(1.0250);-webkit-text-stroke:0.3px #f6f6f6;">abgewinkelt rechts und links</div>
<svg class="a" style="left:1672px;top:1055px;" width="36" height="32" viewBox="0 0 36 32"><path d="M2 15.4 L4.2 13.1 H7.8 L13.9 19 L28.1 1.2 H32 L33.9 3.4 V6.5 L15.9 28.9 H12.2 L2 18.6 Z" fill="#009a00"/></svg>
</div>
<div class="a" style="left:114px;top:415px;width:1715px;height:46px;box-sizing:border-box;border:2px dotted #000;"></div>
<svg class="a" style="left:88px;top:428px;" width="14" height="20" viewBox="0 0 14 20"><path d="M1.5 0.5 V19.5 L12 10 Z" fill="#1455a0"/></svg>
<div class="a" style="left:74px;top:293px;width:3248px;height:2px;background:#b9c9dc;"></div>
<div class="a" style="left:74px;top:293px;width:2px;height:1208px;background:#b9c9dc;"></div>
<div class="a" style="left:3320px;top:293px;width:2px;height:1208px;background:#b9c9dc;"></div>
<div class="a" style="left:74px;top:1499px;width:3248px;height:2px;background:#b9c9dc;"></div>
<div class="a" style="left:3286px;top:296px;width:34px;height:34px;background:#f9f9f9;border:2px solid #a6a6a6;box-sizing:border-box;"></div>
<svg class="a" style="left:3286px;top:296px;" width="34" height="34" viewBox="0 0 34 34"><path d="M11 21 H23 L17 15 Z" fill="#6e6e6e"/></svg>
<div class="a" style="left:3286px;top:330px;width:34px;height:467px;background:#ffffff;border:2px solid #a6a6a6;box-sizing:border-box;"></div>
<div class="a" style="left:3286px;top:1465px;width:34px;height:34px;background:#f9f9f9;border:2px solid #a6a6a6;box-sizing:border-box;"></div>
<svg class="a" style="left:3286px;top:1465px;" width="34" height="34" viewBox="0 0 34 34"><path d="M10 14 H24 L17 21 Z" fill="#6e6e6e"/></svg>
<div class="a" style="left:44px;top:1705px;width:3310px;height:2px;background:#d0d0d0;"></div>
<div class="a" style="left:44px;top:1707px;width:3310px;height:122px;background:#f4f4f4;"></div>
<div class="a" style="left:212px;top:1707px;width:394px;height:116px;background:#fafafa;"></div>
<svg class="a" style="left:100px;top:1727px;" width="60" height="50" viewBox="0 0 60 50"><rect x="1" y="1" width="58" height="48" fill="none" stroke="#1f5b9a" stroke-width="2"/><rect x="1" y="8" width="58" height="2" fill="#1f5b9a"/><path d="M32 24 L52 42 M52 24 L32 42" stroke="#1f5b9a" stroke-width="2.2"/></svg>
<div class="t" style="left:60.5px;top:1793.2px;font-size:25px;line-height:25px;color:#1a1a1a;transform:scaleX(0.9963);-webkit-text-stroke:0.3px #f4f4f4;">Office Heute</div>
<svg class="a" style="left:378px;top:1727px;" width="62" height="52" viewBox="0 0 62 52"><rect x="1" y="1" width="58" height="12" rx="29" ry="6" fill="none" stroke="#1f5b9a" stroke-width="2"/>
<path d="M1 7 V42 Q2 49 30 49 H31" fill="none" stroke="#1f5b9a" stroke-width="2"/><path d="M59 7 V21" fill="none" stroke="#1f5b9a" stroke-width="2"/>
<path d="M1 25 Q3 31 30 31 H43" fill="none" stroke="#1f5b9a" stroke-width="2"/>
<path d="M37 49 V42 L55 25 L59.5 29.5 L43 49 Z" fill="none" stroke="#1f5b9a" stroke-width="2"/></svg>
<div class="t" style="left:227.5px;top:1793.2px;font-size:25px;line-height:25px;color:#2a6ac0;transform:scaleX(1.0090);-webkit-text-stroke:0.3px #fafafa;">Hersteller Auftragsbestätigungen</div>
<svg class="a" style="left:821px;top:1727px;" width="62" height="52" viewBox="0 0 62 52"><rect x="1" y="1" width="58" height="12" rx="29" ry="6" fill="none" stroke="#1f5b9a" stroke-width="2"/>
<path d="M1 7 V42 Q2 49 30 49 H31" fill="none" stroke="#1f5b9a" stroke-width="2"/><path d="M59 7 V21" fill="none" stroke="#1f5b9a" stroke-width="2"/>
<path d="M1 25 Q3 31 30 31 H43" fill="none" stroke="#1f5b9a" stroke-width="2"/>
<path d="M37 49 V42 L55 25 L59.5 29.5 L43 49 Z" fill="none" stroke="#1f5b9a" stroke-width="2"/></svg>
<div class="t" style="left:624.8px;top:1793.2px;font-size:25px;line-height:25px;color:#1a1a1a;transform:scaleX(1.0086);-webkit-text-stroke:0.3px #f4f4f4;">Lieferantenauftragsbestätigungsoptionen</div>
<svg class="a" style="left:3328px;top:1761px;" width="18" height="14" viewBox="0 0 18 14"><path d="M0 0 H6 L9 4 L12 0 H18 V1.6 L12.6 7 L18 12.4 V14 H12 L9 10 L6 14 H0 V12.4 L5.4 7 L0 1.6 Z" fill="#000"/></svg>
<div class="a" style="left:1px;top:1829px;width:3353px;height:2px;background:#9c9c9c;"></div>
<div class="a" style="left:1px;top:1831px;width:3353px;height:46px;background:#1455a0;"></div>
<div class="a" style="left:0px;top:1877px;width:3356px;height:2px;background:#3a3a3a;"></div>
<div class="a" style="left:19px;top:1835px;width:2px;height:38px;background:#e8eef6;"></div>
<div class="a" style="left:422px;top:1835px;width:2px;height:38px;background:#e8eef6;"></div>
<div class="a" style="left:726px;top:1835px;width:2px;height:38px;background:#e8eef6;"></div>
<div class="a" style="left:1662px;top:1835px;width:2px;height:38px;background:#e8eef6;"></div>
<div class="a" style="left:1866px;top:1835px;width:2px;height:38px;background:#e8eef6;"></div>
<div class="a" style="left:2802px;top:1835px;width:2px;height:38px;background:#e8eef6;"></div>
<div class="a" style="left:2876px;top:1835px;width:2px;height:38px;background:#e8eef6;"></div>
<div class="a" style="left:2954px;top:1835px;width:2px;height:38px;background:#e8eef6;"></div>
<div class="a" style="left:3022px;top:1835px;width:2px;height:38px;background:#e8eef6;"></div>
<div class="a" style="left:3238px;top:1835px;width:2px;height:38px;background:#e8eef6;"></div>
<div class="a" style="left:3350px;top:1835px;width:2px;height:38px;background:#e8eef6;"></div>
<div class="t" style="left:739.0px;top:1843.5px;font-size:25px;line-height:25px;color:#ffffff;transform:scaleX(1.0137);-webkit-text-stroke:0.3px #1455a0;">s.wegscheider</div>
<div class="t" style="left:2815.8px;top:1843.5px;font-size:25px;line-height:25px;color:#aab6c8;transform:scaleX(0.8043);-webkit-text-stroke:0.3px #1455a0;">FEST</div>
<div class="t" style="left:2889.0px;top:1843.5px;font-size:25px;line-height:25px;color:#ffffff;transform:scaleX(1.0362);-webkit-text-stroke:0.3px #1455a0;">NUM</div>
<div class="t" style="left:2967.4px;top:1843.5px;font-size:25px;line-height:25px;color:#aab6c8;transform:scaleX(0.8948);-webkit-text-stroke:0.3px #1455a0;">INS</div>
<div class="t" style="left:3036.0px;top:1843.5px;font-size:25px;line-height:25px;color:#ffffff;transform:scaleX(0.9614);-webkit-text-stroke:0.3px #1455a0;">15.04.2025</div>
<div class="t" style="left:3175.8px;top:1843.5px;font-size:25px;line-height:25px;color:#ffffff;transform:scaleX(0.9388);-webkit-text-stroke:0.3px #1455a0;">14:11</div>
<div class="t" style="left:3250.3px;top:1843.5px;font-size:25px;line-height:25px;color:#ffffff;transform:scaleX(0.9802);-webkit-text-stroke:0.3px #1455a0;">8.3233.7</div>
</body></html>
